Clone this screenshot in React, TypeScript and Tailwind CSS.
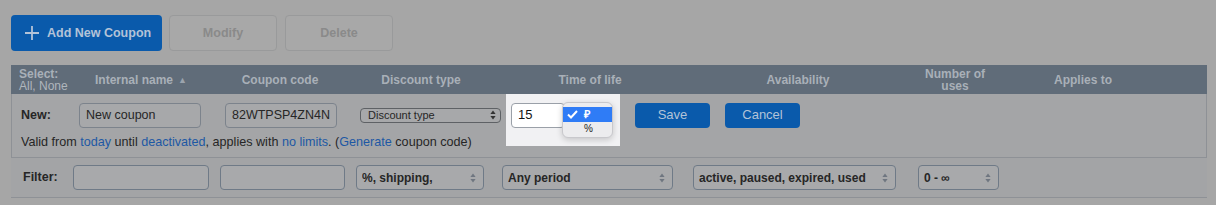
import React from 'react';

const SelectArrows: React.FC<{ className?: string }> = ({ className }) => (
  <svg width="6" height="10" viewBox="0 0 6 10" className={className}>
    <path d="M3 0.5 L5.6 4 L0.4 4 Z" fill="currentColor" />
    <path d="M3 9.5 L5.6 6 L0.4 6 Z" fill="currentColor" />
  </svg>
);

const FilterSelect: React.FC<{ label: string; width: string }> = ({ label, width }) => (
  <div
    className={`${width} h-[25px] rounded-[4px] border border-[#6f7a87] bg-[#a8a9ab] flex items-center justify-between pl-[5px] pr-[7px] text-[12px] font-bold text-[#262626]`}
  >
    <span className="truncate">{label}</span>
    <SelectArrows className="text-[#6f7680] shrink-0" />
  </div>
);

const Link: React.FC<{ children: React.ReactNode }> = ({ children }) => (
  <span className="text-[#1d58a4]">{children}</span>
);

const App: React.FC = () => {
  const headers = [
    { w: 'w-[142px]', text: 'Internal name', arrow: true },
    { w: 'w-[136px]', text: 'Coupon code' },
    { w: 'w-[146px]', text: 'Discount type' },
    { w: 'w-[192px]', text: 'Time of life' },
    { w: 'w-[224px]', text: 'Availability' },
    { w: 'w-[90px]', text: 'Number of uses', two: true },
    { w: 'w-[166px]', text: 'Applies to' },
  ];

  return (
    <div
      className="w-[1216px] h-[205px] bg-[#a6a6a6] overflow-hidden"
      style={{ fontFamily: '"Liberation Sans", Arial, sans-serif' }}
    >
      {/* Toolbar */}
      <div className="flex items-center pt-[15px] pl-[11px]">
        <button className="w-[151px] h-[36px] rounded-[4px] bg-[#0a5aab] flex items-center pl-[13px] gap-[7px] text-[12.5px] font-bold text-[#b3c3d8]">
          <svg width="16" height="16" viewBox="0 0 16 16">
            <path d="M8 1 V15 M1 8 H15" stroke="currentColor" strokeWidth="1.8" />
          </svg>
          Add New Coupon
        </button>
        <button className="ml-[7px] w-[108px] h-[36px] rounded-[4px] border border-[#999a9b] bg-[#a8a8a8] text-[12.5px] font-bold text-[#8a8a8a]">
          Modify
        </button>
        <button className="ml-[8px] w-[108px] h-[36px] rounded-[4px] border border-[#999a9b] bg-[#a8a8a8] text-[12.5px] font-bold text-[#8a8a8a]">
          Delete
        </button>
      </div>

      {/* Table */}
      <div className="mt-[14px] ml-[11px] w-[1196px]">
        {/* Header */}
        <div className="h-[29px] bg-[#606c79] flex items-center text-[12px] font-bold text-[#a9b0b8] leading-[12px]">
          <div className="w-[59px] pl-[8px]">
            <div>Select:</div>
            <div className="font-normal text-[#b0b6bd]">All, None</div>
          </div>
          {headers.map((h) => (
            <div key={h.text} className={`${h.w} text-center`}>
              {h.two ? (
                <>
                  <div>Number of</div>
                  <div>uses</div>
                </>
              ) : (
                <span>
                  {h.text}
                  {h.arrow && <span className="ml-[5px] text-[9px] align-[1px] text-[#9aa3ad]">▲</span>}
                </span>
              )}
            </div>
          ))}
        </div>

        {/* New row */}
        <div className="h-[64px] bg-[#a4a5a7] border-x border-b border-[#8e9196] relative">
          <div className="flex items-center pt-[8px] h-[34px] text-[12.5px] text-[#262626]">
            <div className="w-[67px] pl-[9px] font-bold">New:</div>
            <div className="w-[122px] h-[25px] rounded-[4px] border border-[#7c838c] bg-[#a7a8aa] flex items-center pl-[6px]">
              New coupon
            </div>
            <div className="ml-[24px] w-[112px] h-[25px] rounded-[4px] border border-[#7c838c] bg-[#a7a8aa] flex items-center pl-[6px]">
              82WTPSP4ZN4N
            </div>
            <div className="ml-[23px] w-[141px] h-[15px] rounded-[4px] border border-[#5e6165] bg-[#a7a8aa] flex items-center justify-between pl-[7px] pr-[4px] text-[11px]">
              <span>Discount type</span>
              <SelectArrows className="text-[#333]" />
            </div>
            {/* Spotlight cell */}
            <div className="ml-[5px] w-[114px] h-[25px] relative">
              <div className="absolute left-0 top-[-9px] w-[114px] h-[52px] bg-[#f1f1f3]">
                <div className="absolute left-[5px] top-[9px] w-[54px] h-[25px] rounded-[4px] border border-[#9aa0a8] bg-white flex items-center pl-[6px] text-[13px] text-[#111]">
                  15
                </div>
                <div className="absolute left-[56px] top-[8px] w-[51px] h-[36px] rounded-[6px] border border-[#c8c8cc] bg-[#ececee] shadow-[0_2px_6px_rgba(0,0,0,0.18)] pt-[4px]">
                  <div className="h-[15px] bg-[#2f7cf6] flex items-center text-white text-[11px] font-bold">
                    <svg width="11" height="9" viewBox="0 0 11 9" className="ml-[4px]">
                      <path d="M1 4.5 L4 7.5 L10 1" stroke="white" strokeWidth="2" fill="none" />
                    </svg>
                    <span className="ml-[6px]">₽</span>
                  </div>
                  <div className="h-[13px] flex items-center text-[10px] text-[#222] pl-[21px]">%</div>
                </div>
              </div>
            </div>
            <button className="ml-[15px] w-[75px] h-[25px] rounded-[4px] bg-[#0a5aab] text-[13px] text-[#b3c3d8]">
              Save
            </button>
            <button className="ml-[15px] w-[75px] h-[25px] rounded-[4px] bg-[#0a5aab] text-[13px] text-[#b3c3d8]">
              Cancel
            </button>
          </div>
          <div className="pl-[9px] mt-[5px] text-[12.6px] text-[#262626]">
            Valid from <Link>today</Link> until <Link>deactivated</Link>, applies with <Link>no limits</Link>. (
            <Link>Generate</Link> coupon code)
          </div>
        </div>

        {/* Filter row */}
        <div className="h-[40px] bg-[#a3a4a6] border-b border-[#8e9196] flex items-center text-[12.5px] text-[#262626]">
          <div className="w-[62px] pl-[12px] font-bold">Filter:</div>
          <div className="w-[136px] h-[25px] rounded-[4px] border border-[#6f7a87] bg-[#a8a9ab]" />
          <div className="ml-[11px] w-[125px] h-[25px] rounded-[4px] border border-[#6f7a87] bg-[#a8a9ab]" />
          <div className="ml-[11px]">
            <FilterSelect label="%, shipping," width="w-[128px]" />
          </div>
          <div className="ml-[18px]">
            <FilterSelect label="Any period" width="w-[171px]" />
          </div>
          <div className="ml-[20px]">
            <FilterSelect label="active, paused, expired, used" width="w-[203px]" />
          </div>
          <div className="ml-[22px]">
            <FilterSelect label="0 - ∞" width="w-[81px]" />
          </div>
        </div>
      </div>
    </div>
  );
};

export default App;
